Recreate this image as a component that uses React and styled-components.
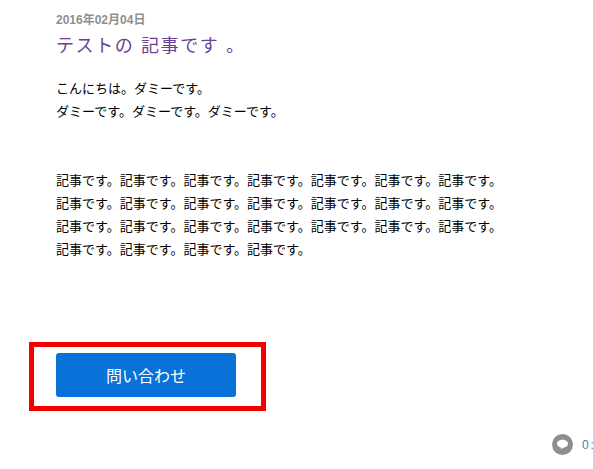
import React from 'react'
import styled, { createGlobalStyle } from 'styled-components'

const GlobalStyle = createGlobalStyle`
  html, body {
    margin: 0;
    padding: 0;
    background: #fff;
    overflow: hidden;
  }
  body {
    font-family: "Liberation Sans", "Noto Sans CJK JP", sans-serif;
  }
`

const Page = styled.div`
  width: 593px;
  height: 469px;
  box-sizing: border-box;
  padding: 13px 0 0 56px;
  display: flex;
  flex-direction: column;
  overflow: hidden;
`

const PostDate = styled.div`
  font-size: 12px;
  line-height: 14px;
  font-weight: bold;
  color: #8f8f8f;
`

const Title = styled.h1`
  margin: 6px 0 0;
  font-size: 18px;
  line-height: 26px;
  font-weight: normal;
  letter-spacing: 1.6px;
  color: #6b3f94;
`

const Body = styled.div`
  margin-top: 18px;
  font-size: 13px;
  line-height: 23px;
  color: #000;
`

const Para = styled.p`
  margin: 0;
  & + & {
    margin-top: 46px;
  }
`

const CtaFrame = styled.div`
  margin: 81px 0 0 -27px;
  width: 237px;
  height: 69px;
  box-sizing: border-box;
  border: 5px solid #f40000;
  padding: 6px 0 0 22px;
  background: #fff;
`

const CtaButton = styled.button`
  display: block;
  width: 180px;
  height: 44px;
  padding: 0;
  border: none;
  border-radius: 3px;
  background: #0872d9;
  color: #fff;
  font-family: inherit;
  font-size: 16px;
  cursor: pointer;
`

const Footer = styled.div`
  margin-top: 23px;
  align-self: flex-end;
  display: flex;
  align-items: center;
  gap: 9px;
  width: 41px;
  white-space: nowrap;
`

const CommentCount = styled.a`
  font-size: 12px;
  word-spacing: -1.5px;
  color: #3f80b8;
`

const IconSvg = styled.svg`
  flex: none;
  width: 21px;
  height: 21px;
`

const CommentIcon = () => (
  <IconSvg viewBox="0 0 21 21">
    <circle cx="10.5" cy="10.5" r="10.5" fill="#8e8e8e" />
    <path d="M10.5 5.8c3.2 0 5.5 1.7 5.5 4 0 2.2-2.1 3.8-4.8 4l-2 1.7.3-1.8c-2.5-.4-4.5-1.9-4.5-3.9 0-2.3 2.3-4 5.5-4z" fill="#fff" />
  </IconSvg>
)

const App = () => {
  const dummy = 'ダミーです。'
  const article = '記事です。'
  return (
    <Page>
      <GlobalStyle />
      <PostDate>2016年02月04日</PostDate>
      <Title>テストの 記事です 。</Title>
      <Body>
        <Para>
          こんにちは。{dummy}
          <br />
          {dummy.repeat(3)}
        </Para>
        <Para>
          {article.repeat(7)}
          <br />
          {article.repeat(7)}
          <br />
          {article.repeat(7)}
          <br />
          {article.repeat(4)}
        </Para>
      </Body>
      <CtaFrame>
        <CtaButton>問い合わせ</CtaButton>
      </CtaFrame>
      <Footer>
        <CommentIcon />
        <CommentCount>0 :</CommentCount>
      </Footer>
    </Page>
  )
}

export default App
